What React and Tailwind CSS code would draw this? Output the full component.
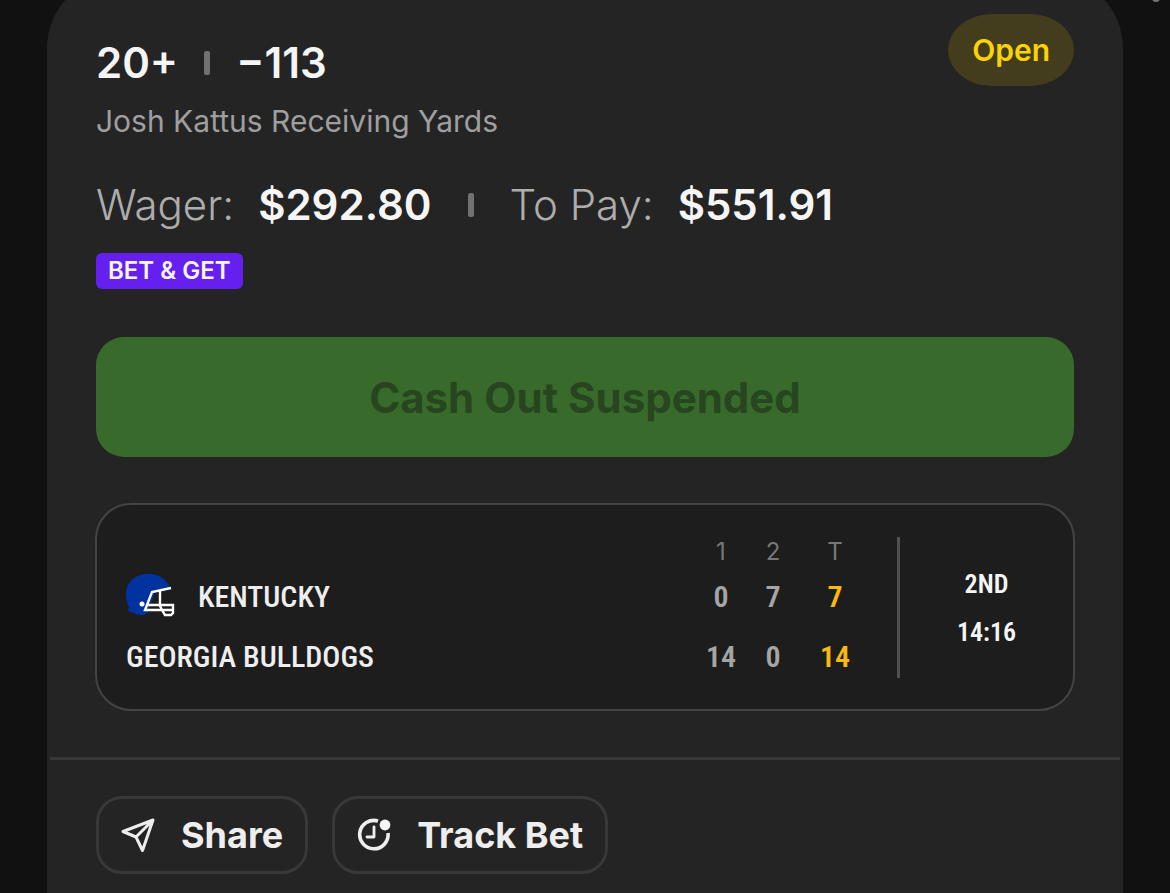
const innings = ['1', '2'];

const teams = [
  { name: 'KENTUCKY', helmet: true, scores: [0, 7], total: 7 },
  { name: 'GEORGIA BULLDOGS', helmet: false, scores: [14, 0], total: 14 },
];

function HelmetIcon() {
  return (
    <svg width="50" height="48" viewBox="0 0 50 48" fill="none" aria-hidden="true">
      <path
        d="M22 1C32 0 41 6 44 15L29 19L22 39C19 43 14 43 10 41L2 38L3 34C0 29 0 23 0 19C1 9 9 1 22 1Z"
        fill="#0033a0"
      />
      <circle cx="16" cy="31" r="2.5" fill="#fff" />
      <path
        d="M45 15L26 19L19 37H34M34 17V33L36 37L39 42H45L47 40V32H20M34 37H47"
        stroke="#fff"
        strokeWidth="2.4"
      />
    </svg>
  );
}

function ShareIcon() {
  return (
    <svg width="36" height="36" viewBox="0 0 36 36" fill="none" aria-hidden="true">
      <path
        d="M32 3L2 14.5L15 20L21.5 33.5L32 3ZM32 3L15 20"
        stroke="#eee"
        strokeWidth="3"
        strokeLinecap="round"
        strokeLinejoin="round"
      />
    </svg>
  );
}

function TrackIcon() {
  return (
    <svg width="36" height="36" viewBox="0 0 36 36" fill="none" aria-hidden="true">
      <path d="M21 4A14.2 14.2 0 1 0 31 16" stroke="#eee" strokeWidth="3.6" />
      <path
        d="M17 10V20H10"
        stroke="#eee"
        strokeWidth="2.8"
        strokeLinecap="round"
        strokeLinejoin="round"
      />
      <circle cx="28" cy="8" r="5.4" fill="#f5f5f5" />
    </svg>
  );
}

function Separator() {
  return <span className="h-6 w-1.5 rounded-xs bg-[#717171]" />;
}

function ActionButton({ icon, children }) {
  return (
    <button
      type="button"
      className="flex h-[78px] items-center gap-6 rounded-[26px] border-3 border-[#383838] px-[22px] text-4xl font-bold text-[#eee]"
    >
      {icon}
      {children}
    </button>
  );
}

export default function App() {
  return (
    <div className="relative min-h-screen overflow-hidden bg-[#111] px-[47px] font-['Inter',sans-serif]">
      <span className="absolute -top-1.5 right-2.5 size-2 rounded-full bg-[#777]" />

      <main className="-mt-6 min-h-[calc(100vh+24px)] rounded-t-[72px] bg-[#242424] pt-6 pb-4">
        <div className="px-[49px]">
          {/* Selection and status */}
          <header className="flex items-start justify-between pt-3.5">
            <div className="pt-[25px]">
              <h1 className="flex items-center gap-[26px] text-[42px] leading-12 font-semibold text-[#f5f5f5]">
                20+
                <Separator />
                −113
              </h1>
              <p className="mt-3.5 text-3xl leading-10 text-[#9f9f9f]">Josh Kattus Receiving Yards</p>
            </div>
            <span className="rounded-[44px/36px] bg-[#443d1d] px-6 text-3xl leading-[72px] font-semibold text-[#fad306]">
              Open
            </span>
          </header>

          {/* Stake and payout */}
          <dl className="mt-10 flex items-center text-[42px] leading-12">
            <dt className="font-light text-[#adadad]">Wager:</dt>
            <dd className="mr-9 ml-6 font-semibold text-[#f5f5f5]">$292.80</dd>
            <Separator />
            <dt className="ml-9 font-light text-[#adadad]">To Pay:</dt>
            <dd className="ml-6 font-semibold text-[#f5f5f5]">$551.91</dd>
          </dl>
          <span className="mt-6 block w-fit rounded-md bg-[#651fee] px-3 text-2xl leading-9 font-semibold text-[#f5f5f5]">
            BET &amp; GET
          </span>

          <button
            type="button"
            disabled
            className="mt-12 h-[120px] w-full rounded-[28px] bg-[#386a2b] text-[42px] font-bold text-[#27461f]"
          >
            Cash Out Suspended
          </button>
        </div>

        {/* Live score */}
        <section className="mx-12 mt-[46px] flex items-start rounded-[36px] border-2 border-[#444] bg-[#1d1d1d] pt-8 pb-[22px] pl-[29px] font-['Roboto_Condensed',Roboto,sans-serif]">
          <table className="flex-1 border-collapse">
            <thead>
              <tr className="h-[30px] font-['Inter',sans-serif] text-2xl leading-[30px] text-[#777]">
                <th className="w-full" />
                {innings.map((inning) => (
                  <th key={inning} className="min-w-[52px] p-0 font-normal">{inning}</th>
                ))}
                <th className="min-w-[72px] p-0 font-normal">T</th>
              </tr>
            </thead>
            <tbody>
              {teams.map((team) => (
                <tr key={team.name} className="h-[60px] text-[30px] leading-10">
                  <th className="p-0 text-left font-medium whitespace-nowrap text-[#eee]">
                    <span className="flex items-center gap-[22px]">
                      {team.helmet && <HelmetIcon />}
                      {team.name}
                    </span>
                  </th>
                  {team.scores.map((score, i) => (
                    <td key={i} className="p-0 text-center font-semibold text-[#a5a5a5]">{score}</td>
                  ))}
                  <td className="p-0 text-center font-semibold text-[#f9b912]">{team.total}</td>
                </tr>
              ))}
            </tbody>
          </table>
          <div className="ml-[26px] h-[141px] w-[3px] bg-[#505050]" />
          <div className="flex h-[141px] w-[173px] flex-col justify-center text-center text-[26px] font-semibold text-[#f5f5f5]">
            <span className="leading-12">2ND</span>
            <span className="leading-12">14:16</span>
          </div>
        </section>

        <hr className="mx-[3px] mt-[46px] border-t-3 border-[#383838]" />

        <footer className="mt-9 flex gap-6 px-[49px]">
          <ActionButton icon={<ShareIcon />}>Share</ActionButton>
          <ActionButton icon={<TrackIcon />}>Track Bet</ActionButton>
        </footer>
      </main>
    </div>
  );
}
